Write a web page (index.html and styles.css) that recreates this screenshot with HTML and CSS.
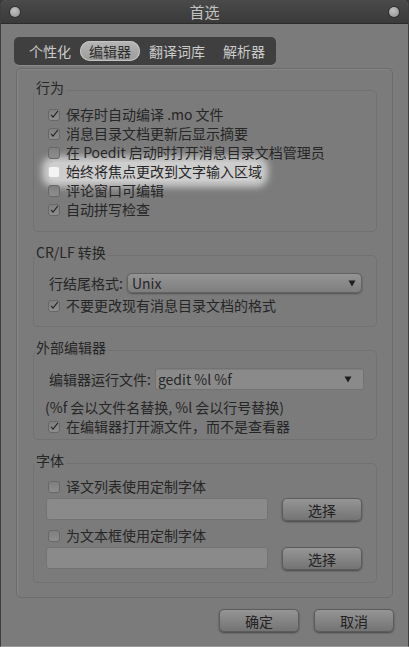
FILE: index.html
```html
<!DOCTYPE html>
<html lang="zh-CN">
<head>
    <meta charset="UTF-8">
    <meta name="viewport" content="width=device-width, initial-scale=1.0">
    <title>首选</title>
    <link rel="stylesheet" href="styles.css">
</head>
<body>
    <div class="window">
        <div class="titlebar">
            <span class="knob"></span>
            <span class="title">首选</span>
            <span class="knob"></span>
        </div>

        <div class="content">
            <div class="tabs">
                <span class="tab">个性化</span>
                <span class="tab active">编辑器</span>
                <span class="tab">翻译词库</span>
                <span class="tab">解析器</span>
            </div>

            <div class="page">
                <fieldset class="group behavior">
                    <legend>行为</legend>
                    <div class="check"><span class="box on"><svg viewBox="0 0 12 12"><path d="M2.3 6.3 L4.8 9.2 L10.6 1.8"/></svg></span>保存时自动编译 .mo 文件</div>
                    <div class="check"><span class="box on"><svg viewBox="0 0 12 12"><path d="M2.3 6.3 L4.8 9.2 L10.6 1.8"/></svg></span>消息目录文档更新后显示摘要</div>
                    <div class="check"><span class="box"></span>在 Poedit 启动时打开消息目录文档管理员</div>
                    <div class="check focus"><span class="box"></span>始终将焦点更改到文字输入区域</div>
                    <div class="check"><span class="box"></span>评论窗口可编辑</div>
                    <div class="check"><span class="box on"><svg viewBox="0 0 12 12"><path d="M2.3 6.3 L4.8 9.2 L10.6 1.8"/></svg></span>自动拼写检查</div>
                </fieldset>

                <fieldset class="group crlf">
                    <legend>CR/LF 转换</legend>
                    <div class="field">
                        <span class="field-label">行结尾格式:</span>
                        <div class="combo">
                            <span>Unix</span>
                            <svg class="arrow" viewBox="0 0 8 7"><path d="M0.5 0.5 H7.5 L4 6.5 Z"/></svg>
                        </div>
                    </div>
                    <div class="check"><span class="box on"><svg viewBox="0 0 12 12"><path d="M2.3 6.3 L4.8 9.2 L10.6 1.8"/></svg></span>不要更改现有消息目录文档的格式</div>
                </fieldset>

                <fieldset class="group editor">
                    <legend>外部编辑器</legend>
                    <div class="field wide">
                        <span class="field-label">编辑器运行文件:</span>
                        <div class="combo entry-combo">
                            <span>gedit %l %f</span>
                            <svg class="arrow" viewBox="0 0 8 7"><path d="M0.5 0.5 H7.5 L4 6.5 Z"/></svg>
                        </div>
                    </div>
                    <p class="hint">(%f 会以文件名替换, %l 会以行号替换)</p>
                    <div class="check"><span class="box on"><svg viewBox="0 0 12 12"><path d="M2.3 6.3 L4.8 9.2 L10.6 1.8"/></svg></span>在编辑器打开源文件，而不是查看器</div>
                </fieldset>

                <fieldset class="group fonts">
                    <legend>字体</legend>
                    <div class="check"><span class="box"></span>译文列表使用定制字体</div>
                    <div class="font-row">
                        <div class="entry"></div>
                        <button class="btn">选择</button>
                    </div>
                    <div class="check second"><span class="box"></span>为文本框使用定制字体</div>
                    <div class="font-row">
                        <div class="entry"></div>
                        <button class="btn">选择</button>
                    </div>
                </fieldset>
            </div>

            <div class="actions">
                <button class="btn">确定</button>
                <button class="btn">取消</button>
            </div>
        </div>
    </div>
</body>
</html>
```

FILE: styles.css
```css
body {
    margin: 0;
    padding: 0;
    background-color: #3a3a3a;
    font-family: "Noto Sans CJK SC", "Noto Sans", sans-serif;
    font-size: 14px;
    color: #262626;
}

.window {
    width: 409px;
    height: 647px;
    box-sizing: border-box;
    background-color: #7b7b7b;
    border-left: 1px solid #3e3e3e;
    border-right: 1px solid #3e3e3e;
    border-bottom: 1px solid #9a9a9a;
    border-radius: 6px 6px 0 0;
    overflow: hidden;
}

/* title bar */
.titlebar {
    height: 24px;
    box-sizing: border-box;
    display: flex;
    align-items: center;
    justify-content: space-between;
    padding: 0 9px 0 9px;
    background: linear-gradient(#4a4a4a, #3a3a3a);
    border-bottom: 1px solid #2b2b2b;
}

.knob {
    width: 10px;
    height: 10px;
    border-radius: 50%;
    background: radial-gradient(circle at 40% 35%, #c2c2c2, #8e8e8e);
    box-shadow: 0 0 0 1px #2e2e2e;
}

.title {
    color: #c2c2c2;
    font-size: 15px;
    line-height: 24px;
}

.content {
    padding: 13px 14px 0 15px;
}

/* tabs */
.tabs {
    display: inline-flex;
    margin-left: -2px;
    padding: 4px 2px 4px 6px;
    background-color: #3f3f3f;
    border-radius: 5px;
    box-shadow: 0 1px 0 rgba(255, 255, 255, 0.12);
}

.tab {
    height: 20px;
    line-height: 20px;
    padding: 0 9px;
    color: #cbcbcb;
    border-radius: 10px;
}

.tab.active {
    background: linear-gradient(#b6b6b6, #9b9b9b);
    box-shadow: inset 0 0 0 1px #c4c4c4;
    color: #2e2e2e;
}

/* notebook page */
.page {
    margin-top: 3px;
    margin-right: 1px;
    padding: 10px 15px 14px 16px;
    border: 1px solid #6c6c6c;
    border-radius: 5px;
    box-shadow: inset 1px 1px 0 rgba(255, 255, 255, 0.08);
}

.group {
    margin: 12px 0 0 0;
    padding: 0 14px;
    min-width: 0;
    border: 1px solid #717171;
    border-radius: 5px;
}

.group legend {
    margin-left: -13px;
    padding: 0 2px 6px 1px;
    line-height: 17px;
}

.behavior {
    margin-top: 0;
    padding-top: 3px;
    padding-bottom: 12px;
}

.crlf {
    padding-top: 6px;
    padding-bottom: 11px;
}

.editor {
    padding-top: 6px;
    padding-bottom: 3px;
}

.fonts {
    padding-top: 2px;
    padding-bottom: 12px;
}

/* check rows */
.check {
    display: flex;
    align-items: center;
    width: fit-content;
    height: 19px;
    line-height: 19px;
    white-space: nowrap;
}

.box {
    width: 12px;
    height: 12px;
    box-sizing: border-box;
    margin-right: 6px;
    border: 1px solid #676767;
    border-radius: 3px;
    background: linear-gradient(#7f7f7f, #8d8d8d);
    display: flex;
}

.box svg {
    width: 11px;
    height: 11px;
    margin: -1px 0 0 0;
    fill: none;
    stroke: #1f1f1f;
    stroke-width: 1.3;
}

.check.focus {
    background: rgba(255, 255, 255, 0.62);
    box-shadow: 0 0 7px 6px rgba(255, 255, 255, 0.6);
    border-radius: 6px;
}

.check.focus .box {
    background: #f4f4f4;
    border-color: #d0d0d0;
}

.crlf .check {
    margin-top: 3px;
}

.editor .check {
    margin-top: 1px;
}

.fonts .check.second {
    margin-top: 5px;
}

/* combo fields */
.field {
    display: flex;
    align-items: center;
    padding-left: 1px;
}

.field-label {
    margin-right: 4px;
    white-space: nowrap;
}

.combo {
    flex: 1;
    height: 20px;
    box-sizing: border-box;
    display: flex;
    align-items: center;
    justify-content: space-between;
    padding: 0 5px 0 4px;
    border: 1px solid #636363;
    border-radius: 5px;
    background: linear-gradient(#949494, #7e7e7e);
    box-shadow: 0 1px 2px rgba(0, 0, 0, 0.35);
}

.arrow {
    width: 8px;
    height: 7px;
    fill: #1e1e1e;
}

.field.wide {
    margin-right: -2px;
}

.entry-combo {
    height: 22px;
    padding: 0 11px 0 2px;
    border: 1px solid #727272;
    border-radius: 3px;
    background: #8a8a8a;
    box-shadow: inset 0 1px 0 rgba(0, 0, 0, 0.08);
}

.hint {
    margin: 9px 0 0 -3px;
    line-height: 17px;
    white-space: nowrap;
}

/* font rows */
.font-row {
    display: flex;
    align-items: center;
    gap: 14px;
    margin: 1px 0 0 -2px;
}

.entry {
    flex: 1;
    height: 22px;
    box-sizing: border-box;
    border: 1px solid #737373;
    border-radius: 3px;
    background: #8a8a8a;
}

.btn {
    width: 80px;
    height: 23px;
    padding: 0;
    font-family: inherit;
    font-size: 14px;
    color: #222;
    border: 1px solid #5c5c5c;
    border-radius: 5px;
    background: linear-gradient(#959595, #747474);
    box-shadow: 0 1px 2px rgba(0, 0, 0, 0.45);
}

.font-row .btn {
    margin-top: 1px;
}

.actions {
    display: flex;
    justify-content: flex-end;
    gap: 15px;
    margin-top: 11px;
}
```
